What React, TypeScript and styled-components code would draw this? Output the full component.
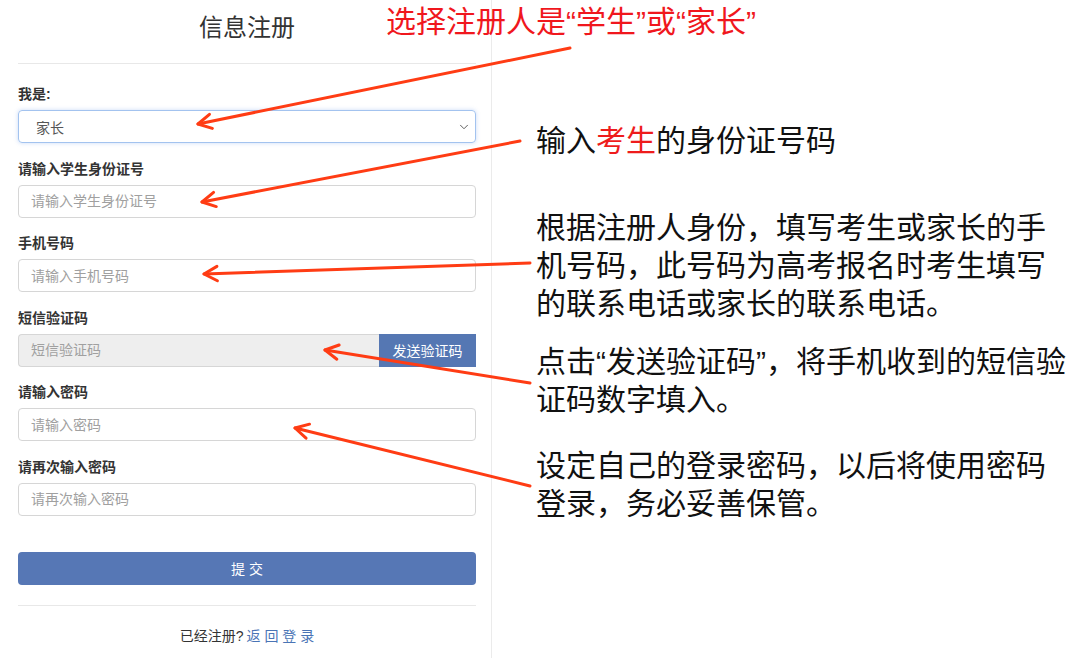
import styled, { createGlobalStyle } from "styled-components";
import { ChevronDown } from "lucide-react";

const GlobalStyle = createGlobalStyle`
  html, body {
    margin: 0;
    padding: 0;
    background: #ffffff;
    font-family: "Liberation Sans", "Noto Sans CJK SC", sans-serif;
  }
`;

const Page = styled.div`
  position: relative;
  display: flex;
  width: 1080px;
  height: 658px;
  overflow: hidden;
`;

const LeftPanel = styled.div`
  width: 492px;
  box-sizing: border-box;
  padding: 0 15px 0 18px;
  border-right: 1px solid #ebebeb;
`;

const Title = styled.h2`
  margin: 0;
  padding-top: 11px;
  font-size: 24px;
  font-weight: normal;
  line-height: 34px;
  text-align: center;
  color: #333;
`;

const Divider = styled.div<{ $top: number }>`
  height: 1px;
  background: #e8e8e8;
  margin-top: ${(p) => p.$top}px;
`;

const Form = styled.form`
  padding-top: 20px;
`;

const Group = styled.div`
  margin-bottom: 15.6px;
`;

const Label = styled.label`
  display: block;
  margin-bottom: 6px;
  font-size: 14px;
  font-weight: bold;
  line-height: 20px;
  color: #333;
`;

const Input = styled.input`
  display: block;
  width: 100%;
  height: 33px;
  box-sizing: border-box;
  padding: 0 12px;
  border: 1px solid #d6d6d6;
  border-radius: 4px;
  font-family: inherit;
  font-size: 14px;
  color: #555;
  background: #fff;
  outline: none;
  &::placeholder {
    color: #a0a0a0;
  }
`;

const SelectBox = styled.div`
  display: flex;
  align-items: center;
  justify-content: space-between;
  height: 33px;
  box-sizing: border-box;
  padding: 0 4px 0 17px;
  border: 1px solid #a3c3ef;
  border-radius: 4px;
  box-shadow: 0 0 4px rgba(102, 150, 230, 0.35);
  font-size: 14px;
  color: #555;
`;

const SmsRow = styled.div`
  display: flex;
`;

const SmsInput = styled(Input)`
  flex: 1;
  min-width: 0;
  background: #eeeeee;
  border-right: none;
  border-radius: 4px 0 0 4px;
`;

const SendButton = styled.button`
  width: 97px;
  height: 33px;
  padding: 0;
  border: none;
  background: #5577b3;
  color: #fff;
  font-family: inherit;
  font-size: 14px;
  cursor: pointer;
`;

const SubmitButton = styled.button`
  display: block;
  width: 100%;
  height: 33px;
  margin-top: 36px;
  border: none;
  border-radius: 4px;
  background: #5677b5;
  color: #fff;
  font-family: inherit;
  font-size: 14px;
  cursor: pointer;
`;

const Footer = styled.p`
  margin: 21px 0 0;
  font-size: 14px;
  line-height: 18px;
  text-align: center;
  color: #333;
  & > a {
    margin-left: 3px;
    color: #4a74b5;
    text-decoration: none;
  }
`;

const Notes = styled.div`
  padding: 122px 0 0 44px;
`;

const Note = styled.p<{ $top: number }>`
  margin: ${(p) => p.$top}px 0 0;
  font-size: 30px;
  line-height: 38px;
  color: #111;
  white-space: nowrap;
  & > em {
    font-style: normal;
    color: #ee1c1c;
  }
`;

const Callout = styled.div`
  position: absolute;
  left: 386px;
  top: 3px;
  font-size: 30px;
  line-height: 38px;
  color: #f0171d;
  white-space: nowrap;
`;

const ArrowLayer = styled.svg`
  position: absolute;
  left: 0;
  top: 0;
  pointer-events: none;
`;

const arrows: [number, number, number, number][] = [
  [570, 48, 198, 124],
  [520, 141, 202, 202],
  [530, 263, 204, 274],
  [530, 383, 325, 350],
  [530, 486, 295, 428],
];

function Arrow({ a }: { a: [number, number, number, number] }) {
  const [sx, sy, tx, ty] = a;
  const ang = Math.atan2(sy - ty, sx - tx);
  const len = 15;
  const spread = 0.5;
  const p1 = [tx + len * Math.cos(ang + spread), ty + len * Math.sin(ang + spread)];
  const p2 = [tx + len * Math.cos(ang - spread), ty + len * Math.sin(ang - spread)];
  return (
    <g stroke="#ff3c14" strokeWidth={3} strokeLinecap="round" strokeLinejoin="round" fill="none">
      <line x1={sx} y1={sy} x2={tx} y2={ty} />
      <polyline points={`${p1[0]},${p1[1]} ${tx},${ty} ${p2[0]},${p2[1]}`} />
    </g>
  );
}

export default function App() {
  return (
    <>
      <GlobalStyle />
      <Page>
        <LeftPanel>
          <Title>信息注册</Title>
          <Divider $top={18} />
          <Form onSubmit={(e) => e.preventDefault()}>
            <Group>
              <Label>我是:</Label>
              <SelectBox>
                <span>家长</span>
                <ChevronDown size={14} color="#555" strokeWidth={1.6} />
              </SelectBox>
            </Group>
            <Group>
              <Label>请输入学生身份证号</Label>
              <Input placeholder="请输入学生身份证号" />
            </Group>
            <Group>
              <Label>手机号码</Label>
              <Input placeholder="请输入手机号码" />
            </Group>
            <Group>
              <Label>短信验证码</Label>
              <SmsRow>
                <SmsInput placeholder="短信验证码" />
                <SendButton type="button">发送验证码</SendButton>
              </SmsRow>
            </Group>
            <Group>
              <Label>请输入密码</Label>
              <Input type="password" placeholder="请输入密码" />
            </Group>
            <Group>
              <Label>请再次输入密码</Label>
              <Input type="password" placeholder="请再次输入密码" />
            </Group>
            <SubmitButton type="submit">提 交</SubmitButton>
          </Form>
          <Divider $top={20} />
          <Footer>
            已经注册?<a href="#">返 回 登 录</a>
          </Footer>
        </LeftPanel>

        <Notes>
          <Note $top={0}>
            输入<em>考生</em>的身份证号码
          </Note>
          <Note $top={49}>
            根据注册人身份，填写考生或家长的手
            <br />
            机号码，此号码为高考报名时考生填写
            <br />
            的联系电话或家长的联系电话。
          </Note>
          <Note $top={20}>
            点击“发送验证码”，将手机收到的短信验
            <br />
            证码数字填入。
          </Note>
          <Note $top={28}>
            设定自己的登录密码，以后将使用密码
            <br />
            登录，务必妥善保管。
          </Note>
        </Notes>

        <Callout>选择注册人是“学生”或“家长”</Callout>
        <ArrowLayer width={1080} height={658} viewBox="0 0 1080 658">
          {arrows.map((a, i) => (
            <Arrow key={i} a={a} />
          ))}
        </ArrowLayer>
      </Page>
    </>
  );
}
